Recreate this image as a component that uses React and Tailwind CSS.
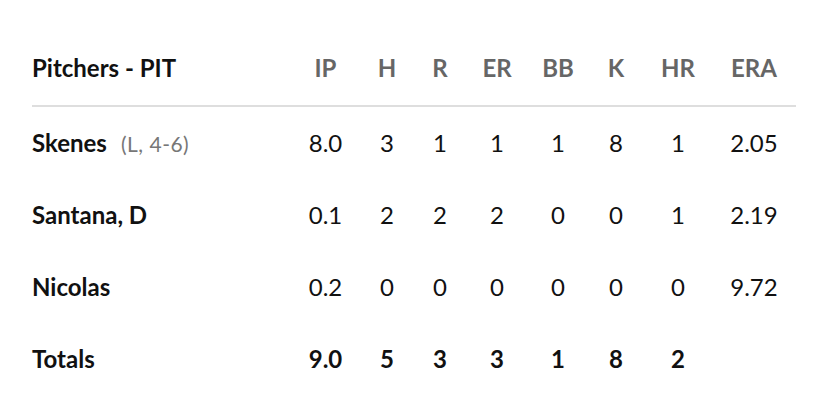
export default function App() {
  const cols = "grid grid-cols-[263px_61px_62px_44px_70px_52px_64px_60px_88px] items-center";
  const rows = [
    { name: "Skenes", note: "(L, 4-6)", v: ["8.0", "3", "1", "1", "1", "8", "1", "2.05"] },
    { name: "Santana, D", v: ["0.1", "2", "2", "2", "0", "0", "1", "2.19"] },
    { name: "Nicolas", v: ["0.2", "0", "0", "0", "0", "0", "0", "9.72"] },
  ];
  const heads = ["IP", "H", "R", "ER", "BB", "K", "HR", "ERA"];
  const totals = ["9.0", "5", "3", "3", "1", "8", "2", ""];
  const cell = (i) => (i === 7 ? "text-center pl-[4px]" : "text-center");
  return (
    <div className="w-[828px] h-[401px] bg-white pt-[35px] pl-[32px] text-[#111] font-['Lato',sans-serif]">
      <div className="w-[764px]">
        <div className={`${cols} h-[72px] pb-[4px] border-b-2 border-[#dedede]`}>
          <div className="text-[24px] font-bold text-[#111]">Pitchers - PIT</div>
          {heads.map((h, i) => (
            <div key={h} className={`${cell(i)} text-[24px] font-bold text-[#666]`}>{h}</div>
          ))}
        </div>
        {rows.map((r) => (
          <div key={r.name} className={`${cols} h-[72px]`}>
            <div className="flex items-baseline">
              <span className="text-[24px] font-bold text-[#111]">{r.name}</span>
              {r.note && <span className="ml-[14px] text-[21px] tracking-[0.5px] text-[#777]">{r.note}</span>}
            </div>
            {r.v.map((x, i) => (
              <div key={i} className={`${cell(i)} text-[24px] text-[#111]`}>{x}</div>
            ))}
          </div>
        ))}
        <div className={`${cols} h-[72px]`}>
          <div className="text-[24px] font-bold text-[#111]">Totals</div>
          {totals.map((x, i) => (
            <div key={i} className={`${cell(i)} text-[24px] font-bold text-[#111]`}>{x}</div>
          ))}
        </div>
      </div>
    </div>
  );
}
